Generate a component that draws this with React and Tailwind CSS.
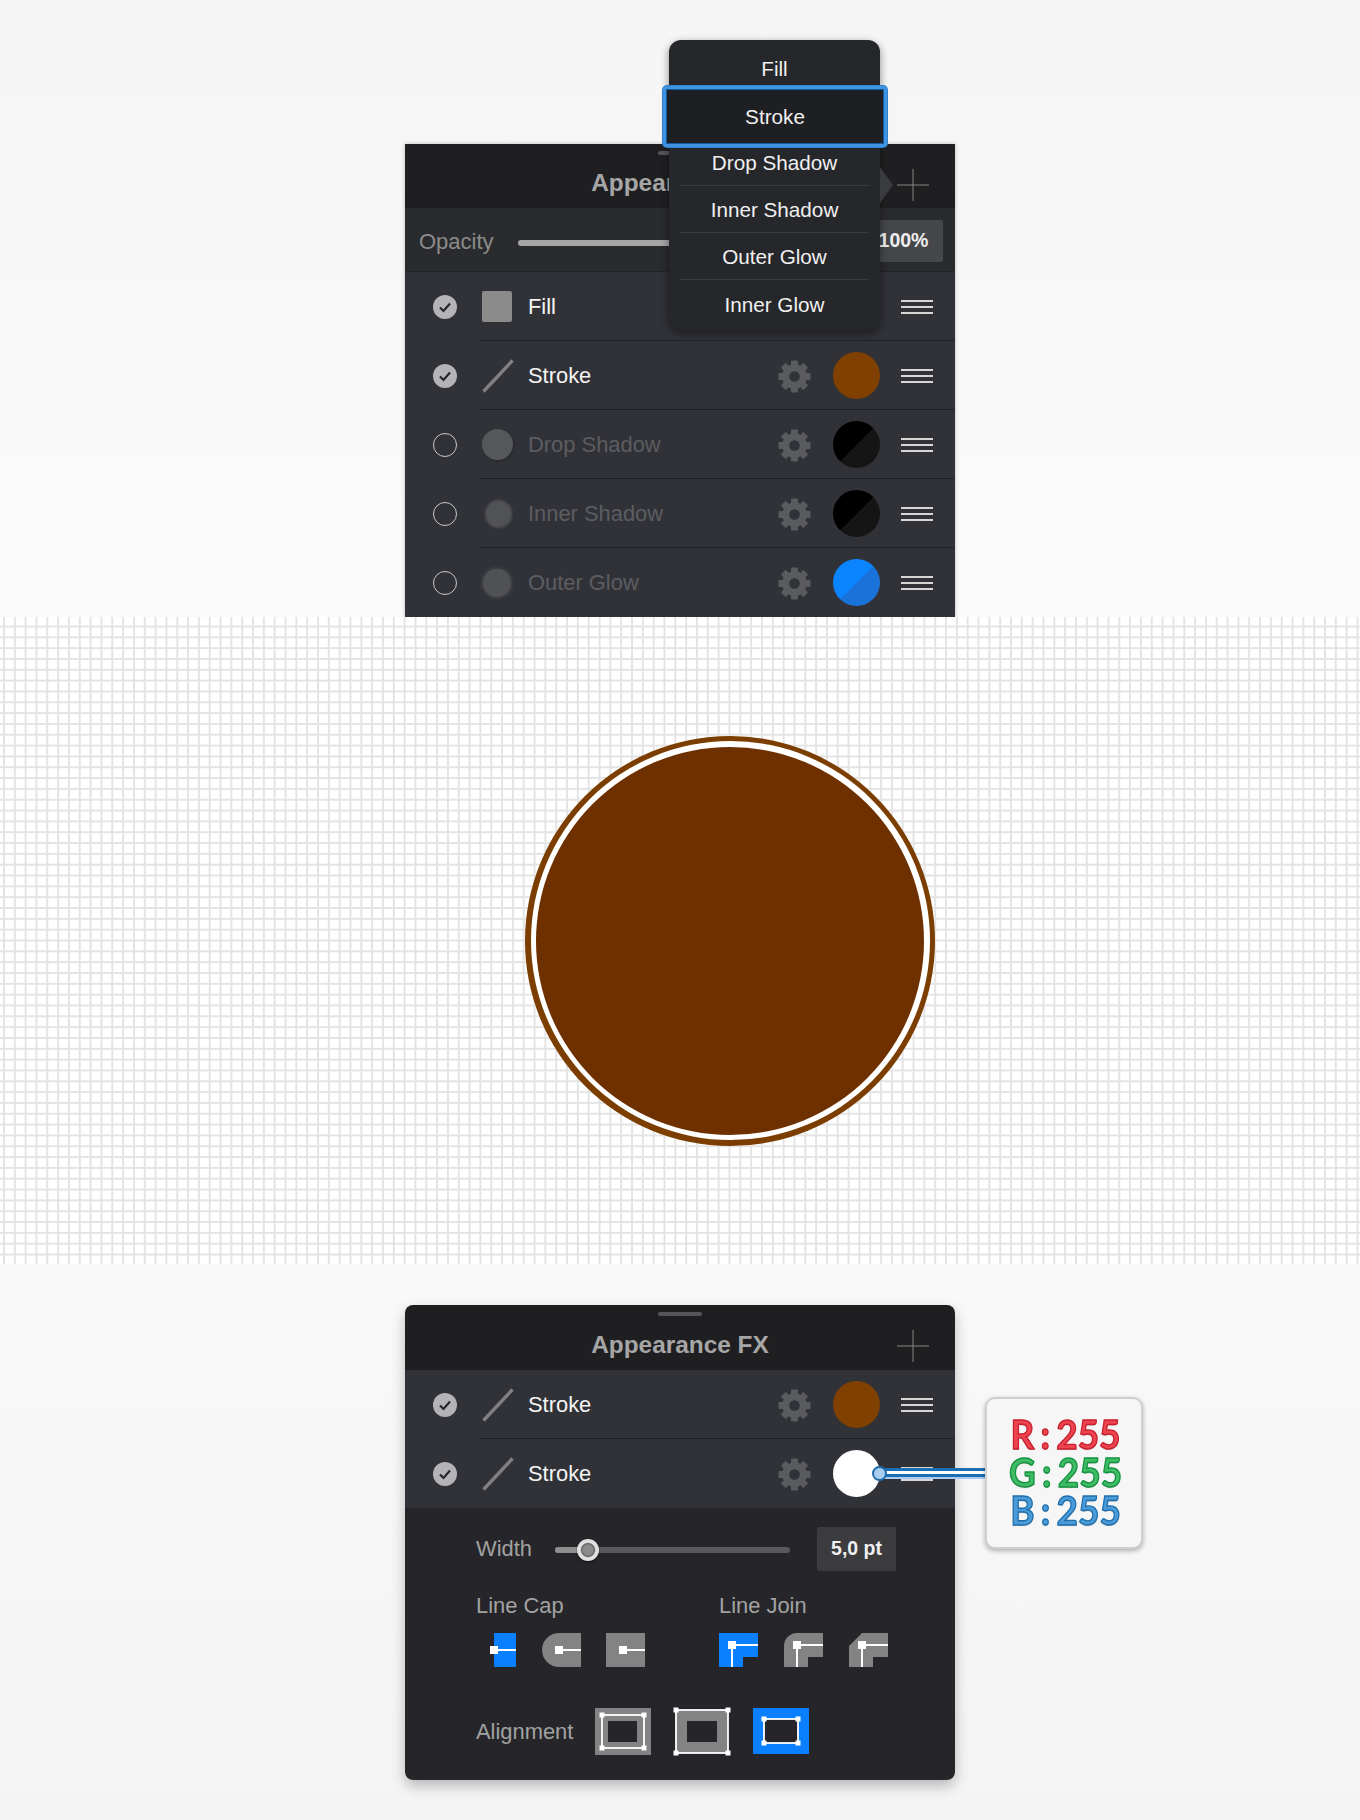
import React from 'react';

const SANS = 'font-["Liberation_Sans",Arial,sans-serif]';

function Check() {
  return (
    <svg width="24" height="24" viewBox="0 0 24 24">
      <circle cx="12" cy="12" r="12" fill="#b4b4b6" />
      <path d="M7 12.5l3.5 3.5L17 8.6" fill="none" stroke="#26272b" strokeWidth="2.2" />
    </svg>
  );
}

function Radio() {
  return <div className="w-6 h-6 rounded-full border border-[#c8c8c8]" />;
}

function Gear() {
  const teeth = [0, 45, 90, 135, 180, 225, 270, 315];
  return (
    <svg width="33" height="33" viewBox="0 0 33 33" className="mt-[2px]">
      {teeth.map((a) => (
        <rect key={a} x="13" y="0.5" width="7" height="7" rx="1" fill="#5a5b5f" transform={`rotate(${a} 16.5 16.5)`} />
      ))}
      <circle cx="16.5" cy="16.5" r="8.8" fill="none" stroke="#5a5b5f" strokeWidth="7" />
    </svg>
  );
}

function Bars() {
  return (
    <div className="w-8 flex flex-col gap-1">
      <div className="h-[2px] bg-[#d6d6d6]" />
      <div className="h-[2px] bg-[#d6d6d6]" />
      <div className="h-[2px] bg-[#d6d6d6]" />
    </div>
  );
}

function Swatch({ tone }) {
  if (tone === 'black') {
    return <div className="w-[47px] h-[47px] rounded-full bg-[linear-gradient(135deg,#000000_50%,#151515_50%)]" />;
  }
  if (tone === 'blue') {
    return <div className="w-[47px] h-[47px] rounded-full bg-[linear-gradient(135deg,#0a84ff_50%,#1a73d8_50%)]" />;
  }
  if (tone === 'white') {
    return <div className="w-[47px] h-[47px] rounded-full bg-white" />;
  }
  return <div className="w-[47px] h-[47px] rounded-full bg-[#7f4000]" />;
}

function StrokeGlyph() {
  return (
    <svg width="32" height="34" viewBox="0 0 32 34">
      <path d="M1.5 32.5L30.5 1.5" stroke="#808082" strokeWidth="3.4" />
    </svg>
  );
}

function Glyph({ kind }) {
  if (kind === 'fill') return <div className="w-[30px] h-[31px] rounded-[2px] bg-[#8b8b8c]" />;
  if (kind === 'stroke') return <StrokeGlyph />;
  if (kind === 'drop') return <div className="w-[31px] h-[31px] rounded-full bg-[#56575b] shadow-[1px_1px_2px_#26272b]" />;
  if (kind === 'inner') return <div className="w-[27px] h-[28px] ml-[3px] rounded-full bg-[#515256] blur-[1px]" />;
  return <div className="w-[28px] h-[28px] ml-[1px] rounded-full bg-[#505155] shadow-[0_0_4px_#55565a]" />;
}

function Row({ on, kind, label, tone, last }) {
  return (
    <div className="relative h-[69px] bg-[#313238] flex items-center">
      <div className="w-[78px] pl-[28px] shrink-0">{on ? <Check /> : <Radio />}</div>
      <div className="w-[46px] shrink-0 -ml-[1px] flex items-center">
        <Glyph kind={kind} />
      </div>
      <div className={`pt-[2px] text-[21.9px] ${on ? 'text-[#f4f4f4]' : 'text-[#5c5d61]'}`}>{label}</div>
      <div className="ml-auto flex items-center pr-[22px]">
        {tone && <Gear />}
        {tone && <div className="w-[22px]" />}
        {tone && <Swatch tone={tone} />}
        <div className="w-[21px]" />
        <Bars />
      </div>
      {!last && <div className="absolute left-[74px] right-0 bottom-0 h-[1px] bg-[#212226]" />}
    </div>
  );
}

function Header({ height }) {
  return (
    <div className={`relative ${height} bg-[#1f1f21] flex items-center justify-center pt-[15px]`}>
      <div className="absolute left-[253px] top-[7px] w-[44px] h-[4px] rounded-full bg-[#55565a]" />
      <div className="text-[24.4px] font-bold text-[#a6a6a6]">Appearance FX</div>
      <svg width="32" height="32" viewBox="0 0 32 32" className="absolute right-[26px] top-[25px]">
        <path d="M16 0v32M0 16h32" stroke="#858585" strokeWidth="1" />
      </svg>
    </div>
  );
}

function PopupMenu() {
  const rest = ['Drop Shadow', 'Inner Shadow', 'Outer Glow', 'Inner Glow'];
  return (
    <div className="absolute left-[669px] top-[40px] w-[211px] h-[290px] rounded-[12px] bg-[#26272b] shadow-[0_3px_8px_rgba(0,0,0,0.45)] text-[20.7px] text-[#f0f0f0]">
      <div className="h-[47px] pt-[11px] flex items-center justify-center">Fill</div>
      <div className="absolute -left-[6px] -right-[7px] top-[46px] h-[61px] flex items-center justify-center rounded-[4px] bg-[#1e1f23] border-[3px] border-[#3f93e0] shadow-[0_0_0_1px_#2d83cf,inset_0_0_0_1px_#0f5ea6]">
        Stroke
      </div>
      <div className="mt-[52px]">
        {rest.map((t, i) => (
          <div key={t} className={`h-[47px] mx-[11px] pt-[2px] flex items-center justify-center ${i < 3 ? 'border-b border-[#3b3c40]' : ''}`}>
            {t}
          </div>
        ))}
      </div>
      <div className="absolute -right-[13px] top-[127px] w-0 h-0 border-y-[18px] border-y-transparent border-l-[13px] border-l-[#3a3b3f]" />
    </div>
  );
}

function TopSection() {
  return (
    <div className="relative h-[617px] overflow-hidden bg-[linear-gradient(180deg,#f5f5f5,#fbfbfb)]">
      <div className="w-[550px] mx-auto mt-[144px] pt-[144px] shadow-[0_0_4px_rgba(0,0,0,0.25)]">
        <div className="-mt-[144px]">
          <Header height="h-[64px]" />
          <div className="relative h-[64px] bg-[#2a2b2f] flex items-center border-b border-[#222327]">
            <div className="pl-[14px] pt-[3px] text-[22px] text-[#8b8b8b]">Opacity</div>
            <div className="absolute left-[113px] top-[32px] w-[200px] h-[6px] rounded-full bg-[#a5a5a5]" />
            <div className="absolute left-[459px] top-[12px] w-[79px] h-[42px] rounded-[2px] bg-[#46474a] flex items-center justify-center text-[19.5px] font-bold text-[#eeeeee]">
              100%
            </div>
          </div>
          <Row on kind="fill" label="Fill" />
          <Row on kind="stroke" label="Stroke" tone="brown" />
          <Row kind="drop" label="Drop Shadow" tone="black" />
          <Row kind="inner" label="Inner Shadow" tone="black" />
          <Row kind="outer" label="Outer Glow" tone="blue" last />
        </div>
      </div>
      <PopupMenu />
    </div>
  );
}

function GridSection() {
  return (
    <div className="h-[647px] flex items-center pl-[525px] bg-white bg-[linear-gradient(#e4e4e4_2.4px,transparent_2.4px),linear-gradient(90deg,#e4e4e4_2.4px,transparent_2.4px)] bg-[size:10.83px_10.83px] bg-[position:3px_8.5px]">
      <div className="w-[410px] h-[410px] rounded-full bg-[#7c3e00] p-[5.5px]">
        <div className="w-full h-full rounded-full bg-white p-[5.5px]">
          <div className="w-full h-full rounded-full bg-[#6f3000]" />
        </div>
      </div>
    </div>
  );
}

function Node({ x, y, s = 8 }) {
  return <rect x={x - s / 2} y={y - s / 2} width={s} height={s} fill="#fff" />;
}

function CapIcon({ kind }) {
  if (kind === 'butt') {
    return (
      <svg width="24" height="34" viewBox="0 0 24 34" className="overflow-visible">
        <rect x="1" width="22" height="34" fill="#0a80ff" />
        <path d="M1 17h22" stroke="#fff" strokeWidth="2" />
        <Node x={1} y={17} />
      </svg>
    );
  }
  const d = kind === 'round' ? 'M39 0H17A17 17 0 0 0 17 34H39Z' : 'M0 0H39V34H0Z';
  return (
    <svg width="39" height="34" viewBox="0 0 39 34">
      <path d={d} fill="#838383" />
      <path d="M17 17h22" stroke="#fff" strokeWidth="2" />
      <Node x={17} y={17} />
    </svg>
  );
}

function JoinIcon({ kind }) {
  const outer = {
    miter: 'M0 0H39V24H24V34H0Z',
    round: 'M13 0H39V24H24V34H0V13A13 13 0 0 1 13 0Z',
    bevel: 'M13 0H39V24H24V34H0V13Z',
  }[kind];
  return (
    <svg width="39" height="34" viewBox="0 0 39 34">
      <path d={outer} fill={kind === 'miter' ? '#0a80ff' : '#838383'} />
      <path d="M13 12H39M13 12V34" stroke="#fff" strokeWidth="2" />
      <Node x={13} y={12} />
    </svg>
  );
}

const ALIGN = {
  outside: {
    width: 56,
    fill: '#838383',
    box: { x: 0, y: 0, w: 56, h: 47 },
    hole: { x: 13, y: 13, w: 29, h: 21 },
    line: { x: 7, y: 7, w: 42, h: 33 },
  },
  center: {
    width: 52,
    fill: '#838383',
    box: { x: 0, y: 2, w: 52, h: 43 },
    hole: { x: 11, y: 13, w: 30, h: 21 },
    line: { x: 0, y: 2, w: 52, h: 43 },
  },
  inside: {
    width: 56,
    fill: '#0a80ff',
    box: { x: 0, y: 0, w: 56, h: 46 },
    hole: { x: 11, y: 11, w: 34, h: 24 },
    line: { x: 11, y: 11, w: 34, h: 24 },
  },
};

function AlignIcon({ kind }) {
  const { width, fill, box, hole, line } = ALIGN[kind];
  const pts = [
    [line.x, line.y],
    [line.x + line.w, line.y],
    [line.x, line.y + line.h],
    [line.x + line.w, line.y + line.h],
  ];
  return (
    <svg width={width} height="47" viewBox={`0 0 ${width} 47`} className="overflow-visible">
      <rect x={box.x} y={box.y} width={box.w} height={box.h} fill={fill} />
      <rect x={hole.x} y={hole.y} width={hole.w} height={hole.h} fill="#26262a" />
      <rect x={line.x} y={line.y} width={line.w} height={line.h} fill="none" stroke="#fff" strokeWidth="1.8" />
      {pts.map(([x, y]) => (
        <Node key={`${x}-${y}`} x={x} y={y} s={5} />
      ))}
    </svg>
  );
}

function StrokeOptions() {
  return (
    <div className="h-[272px] rounded-b-[8px] bg-[#26262a] relative text-[21.9px] text-[#a2a2a2]">
      <div className="flex items-center pl-[71px] pt-[20px]">
        <div className="w-[79px]">Width</div>
        <div className="relative w-[235px] h-[6px] rounded-full bg-[#59595b]">
          <div className="w-[33px] h-full rounded-l-full bg-[#8e8e8e]" />
          <div className="absolute left-[22px] -top-[8px] w-[22px] h-[22px] rounded-full bg-[radial-gradient(circle,#8a8a8a_30%,#6a6a6a_42%,#e4e4e4_50%,#d0d0d0_100%)] shadow-[0_1px_2px_rgba(0,0,0,0.6)]" />
        </div>
        <div className="ml-[27px] w-[79px] h-[44px] -mt-[1px] rounded-[2px] bg-[#3c3c3f] flex items-center justify-center text-[19.5px] font-bold text-[#f0f0f0]">
          5,0 pt
        </div>
      </div>
      <div className="flex pl-[71px] pt-[22px]">
        <div className="w-[243px]">
          <div className="leading-[26px]">Line Cap</div>
          <div className="flex gap-[25px] mt-[14px] ml-[17px]">
            <CapIcon kind="butt" />
            <CapIcon kind="round" />
            <CapIcon kind="square" />
          </div>
        </div>
        <div>
          <div className="leading-[26px]">Line Join</div>
          <div className="flex gap-[26px] mt-[14px]">
            <JoinIcon kind="miter" />
            <JoinIcon kind="round" />
            <JoinIcon kind="bevel" />
          </div>
        </div>
      </div>
      <div className="flex items-center pl-[71px] mt-[41px]">
        <div className="w-[119px] pt-[2px]">Alignment</div>
        <div className="flex gap-[25px]">
          <AlignIcon kind="outside" />
          <AlignIcon kind="center" />
          <AlignIcon kind="inside" />
        </div>
      </div>
    </div>
  );
}

function RgbLine({ label, cls }) {
  return (
    <div className={`flex justify-center gap-[7px] ml-[3px] leading-[38px] h-[38px] scale-x-[0.9] [text-shadow:0_1px_1px_rgba(0,0,0,0.25)] ${cls}`}>
      <span>{label}</span>
      <span>:</span>
      <span>255</span>
    </div>
  );
}

function RgbCallout() {
  return (
    <>
      <div className="absolute left-[475px] top-[163px] w-[106px] h-[9px] bg-white border-y-[3px] border-[#1d6fb5] shadow-[0_2px_0_#a9cdf0]" />
      <div className="absolute left-[467px] top-[161px] w-[15px] h-[15px] rounded-full bg-[#a9cdf0] border-2 border-[#1f6aa8]" />
      <div className="absolute left-[580px] top-[92px] w-[158px] h-[152px] rounded-[10px] bg-[#f6f6f6] border-2 border-[#cfcfcf] shadow-[0_2px_5px_rgba(0,0,0,0.3)] pt-[16px] font-['Lato',sans-serif] font-bold text-[41px]">
        <RgbLine label="R" cls="text-[#ee4450] [-webkit-text-stroke:1.4px_#c8202e]" />
        <RgbLine label="G" cls="text-[#3fbb66] [-webkit-text-stroke:1.4px_#14933f]" />
        <RgbLine label="B" cls="text-[#4a9bd8] [-webkit-text-stroke:1.4px_#1f6fae]" />
      </div>
    </>
  );
}

function BottomSection() {
  return (
    <div className="h-[556px] pt-[41px] bg-[linear-gradient(180deg,#f9f9f9,#f4f4f4)]">
      <div className="relative w-[550px] mx-auto rounded-[8px] shadow-[0_6px_14px_rgba(0,0,0,0.25)]">
        <div className="rounded-t-[8px] overflow-hidden">
          <Header height="h-[65px]" />
        </div>
        <Row on kind="stroke" label="Stroke" tone="brown" />
        <Row on kind="stroke" label="Stroke" tone="white" last />
        <StrokeOptions />
        <RgbCallout />
      </div>
    </div>
  );
}

export default function App() {
  return (
    <div className={`w-[1360px] h-[1820px] overflow-hidden ${SANS}`}>
      <TopSection />
      <GridSection />
      <BottomSection />
    </div>
  );
}
